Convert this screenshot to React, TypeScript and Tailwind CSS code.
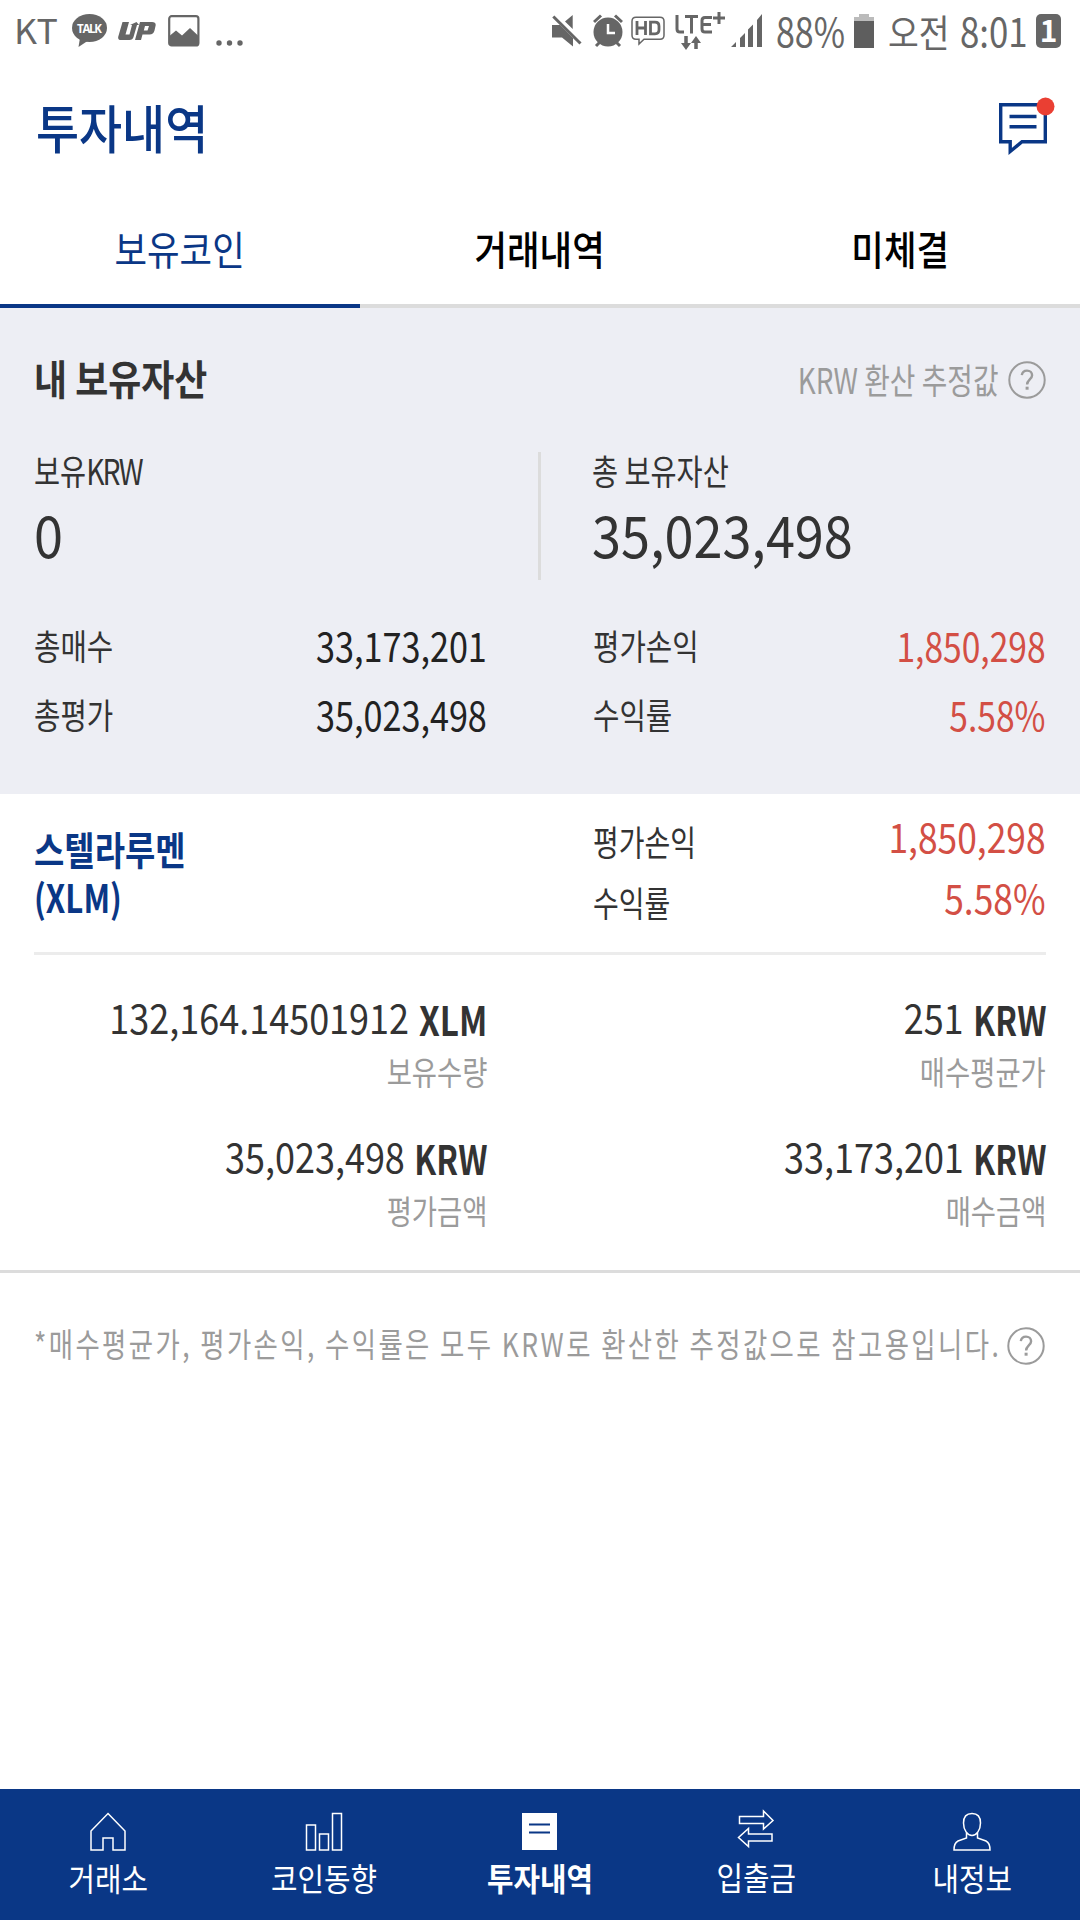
import type { ReactNode } from 'react';

const tabs = ['보유코인', '거래내역', '미체결'];

function HelpIcon() {
  return (
    <svg width="38" height="38" viewBox="0 0 38 38" fill="none" stroke="#9b9b9b" strokeWidth="2">
      <circle cx="19" cy="19" r="17.7" />
      <path d="M13.8 14.2c.4-3 2.3-4.6 5.2-4.6 3 0 5.1 1.8 5.1 4.6 0 4-5 4.6-5 9.4" strokeWidth="2.4" />
      <path d="M17.6 27.2h3" strokeWidth="3" />
    </svg>
  );
}

function StatusBar() {
  return (
    <div className="flex h-[62px] items-center justify-between pl-[14px] pr-[19px] text-[#666]">
      <div className="flex items-center">
        <span className="mb-[2px] w-[58px] origin-left scale-x-[1.05] text-[34px] leading-none">KT</span>
        <svg width="35" height="34" viewBox="0 0 35 34" fill="#666">
          <ellipse cx="17.5" cy="14" rx="17.5" ry="14" />
          <path d="M8 24 6.500 33 17 26z" />
          <text x="17.5" y="18.500" textAnchor="middle" fill="#fff" fontFamily="Open Sans" fontWeight="700" fontSize="11.500" textLength="25">TALK</text>
        </svg>
        <svg className="ml-[11px]" width="38" height="18" viewBox="0 0 38 18" fill="#666">
          <path d="M4.500 0h6.500L7.500 12.500h4L14 3l-2 .1L18.500 0 21 3h-2L15.500 15q-.8 3-4 3H3q-3.500 0-2.700-3.500z" />
          <path d="M22 0h12q4.500 0 3.500 4L36.500 8.500q-1 4-5 4h-7L23 18h-6zM27 4l-1.200 4.500h3.700L31 4z" fillRule="evenodd" />
        </svg>
        <svg className="ml-[12px]" width="32" height="32" viewBox="0 0 32 32">
          <rect x="1.200" y="1.200" width="29.200" height="29.200" rx="2.500" fill="none" stroke="#666" strokeWidth="2.200" />
          <path d="M2 20.500 8 15.500l6 5L22 13l8 7.500V30H2z" fill="#666" />
        </svg>
        <svg className="ml-[16px] mt-[23px]" width="28" height="6" viewBox="0 0 28 6" fill="#666">
          <circle cx="3" cy="3" r="2.700" />
          <circle cx="13.500" cy="3" r="2.700" />
          <circle cx="24" cy="3" r="2.700" />
        </svg>
      </div>
      <div className="flex items-center">
        <svg width="30" height="33" viewBox="0 0 30 33" fill="#666">
          <path d="M0 10h8l13 13v8.500L10 22.500H0zM20.700 0v14L13 6.500z" />
          <path d="M1.300 1.500 28.500 28.500" stroke="#666" strokeWidth="3" />
        </svg>
        <svg className="ml-[11px]" width="30" height="34" viewBox="0 0 30 34">
          <path d="M1 8 8 1.500M29 8 22 1.500M3 32l4-4M27 32l-4-4" stroke="#666" strokeWidth="3" />
          <circle cx="15" cy="18" r="14.500" fill="#666" />
          <path d="M15 10v9h7" fill="none" stroke="#fff" strokeWidth="2.500" />
        </svg>
        <svg className="ml-[8px]" width="34" height="30" viewBox="0 0 34 30" fill="none" stroke="#666">
          <path d="M5 1.200h24q4 0 4 4v14q0 4-4 4H13L8 28v-4.800H5q-4 0-4-4v-14q0-4 4-4z" strokeWidth="1.500" />
          <path d="M6 5v14M14.500 5v14M6 12h8.500M19.500 6.200h4.500q4 0 4 4v3.600q0 4-4 4h-4.500z" strokeWidth="2.800" />
        </svg>
        <svg className="ml-[10px]" width="50" height="40" viewBox="0 0 50 40" fill="none" stroke="#666">
          <path d="M2 4v14q0 3 3 3h4M10 5.500h13M16.500 5.500v17M37 6.500h-7q-3 0-3 3v8.500q0 3 3 3h7M27 13.500h9M38 7h12M44 1v12" strokeWidth="3" />
          <path d="M11 25v8M21 30v8" strokeWidth="3.500" />
          <path d="M6 32h10l-5 7zM16 32h10l-5-7z" fill="#666" stroke="none" />
        </svg>
        <svg className="ml-[6px]" width="32" height="34" viewBox="0 0 32 34" fill="#666">
          <path d="M0 33l5-5v5zM9 24l5-5v14H9zM17 15.500l5-5V33h-5zM26 6l5-6v33h-5z" />
        </svg>
        <span className="mb-[2px] ml-[13px] w-[68px] origin-left scale-x-[.85] text-[40px] leading-none">88%</span>
        <svg className="ml-[10px]" width="20" height="34" viewBox="0 0 20 34">
          <path d="M5 0h10v3h5v4H0V3h5z" fill="#bbb" />
          <path d="M0 7h20v27H0z" fill="#5e5e5e" />
        </svg>
        <span className="ml-[14px] w-[61px] origin-left scale-x-[.88] text-[38px] leading-none">오전</span>
        <span className="mb-[2px] ml-[11px] w-[68px] origin-left scale-x-[.87] text-[40px] leading-none">8:01</span>
        <span className="ml-[8px] flex h-[34px] w-[25px] items-center justify-center rounded-[5px] bg-[#666] pb-[4px] text-[30px] font-bold leading-none text-white">1</span>
      </div>
    </div>
  );
}

function SummaryRow({ label, value, red }: { label: string; value: string; red?: boolean }) {
  return (
    <div className="flex h-[69px] items-center justify-between">
      <span className="origin-left scale-x-[.82] text-[35px]">{label}</span>
      <span className={`origin-right text-[40px] ${red ? 'scale-x-[.84] text-[#d34f45]' : 'scale-x-[.855] text-[#222]'}`}>{value}</span>
    </div>
  );
}

function Holding({ value, unit, label }: { value: string; unit: string; label: string }) {
  return (
    <div className="flex h-[139px] flex-col">
      <div className="flex h-[58px] items-center justify-end">
        <span className="origin-right scale-x-[.9] pt-[4px] text-[40px]">{value}</span>
        <span className={`flex justify-end pt-[8px] ${unit === 'XLM' ? 'w-[78px]' : 'w-[82px]'}`}>
          <span className={`origin-right text-[40px] font-bold ${unit === 'XLM' ? 'scale-x-[.83]' : 'scale-x-[.8]'}`}>{unit}</span>
        </span>
      </div>
      <div className="flex h-[54px] items-center justify-end">
        <span className="origin-right scale-x-[.83] text-[33px] text-[#9b9b9b]">{label}</span>
      </div>
    </div>
  );
}

function NavItem({ label, active, children }: { label: string; active?: boolean; children: ReactNode }) {
  return (
    <div className="flex flex-1 flex-col items-center pt-[21px]">
      {children}
      <span className={`mt-[5px] scale-x-[.9] text-[32px] leading-[40px] ${active ? 'font-bold' : ''}`}>{label}</span>
    </div>
  );
}

export default function App() {
  return (
    <div className="flex h-[1920px] w-[1080px] flex-col overflow-hidden whitespace-nowrap bg-white font-['Noto_Sans_CJK_KR',sans-serif] leading-none text-[#333]">
      <StatusBar />

      <header className="flex h-[134px] items-center justify-between pb-[5px] pl-[36px] pr-[25px]">
        <h1 className="origin-left scale-x-[.9] text-[52px] font-medium text-[#0a3786]">투자내역</h1>
        <svg className="mb-[1px]" width="56" height="60" viewBox="0 0 56 60" fill="none" stroke="#0a3786" strokeWidth="3.400">
          <path d="M1.700 8.700h44.600v37H23L11.200 55.500v-9.800H1.700z" />
          <path d="M10.500 20.500h27M10.500 30.700h27" />
          <circle cx="46.500" cy="10.500" r="9" fill="#ea3f33" stroke="none" />
        </svg>
      </header>

      {/* Tabs */}
      <nav className="flex h-[112px] text-[40px]">
        {tabs.map((tab, idx) => (
          <div
            key={tab}
            className={`flex flex-1 items-center justify-center border-b-4 pb-[4px] ${
              idx === 0 ? 'border-[#0a3786] text-[#0a3786]' : 'border-[#dcdcdc] font-medium text-black'
            }`}
          >
            <span className="scale-x-[.885]">{tab}</span>
          </div>
        ))}
      </nav>

      {/* Total assets */}
      <section className="h-[486px] bg-[#edeef4] px-[34px] pt-[35px]">
        <div className="flex h-[70px] items-center justify-between">
          <h2 className="origin-left scale-x-[.875] pb-[2px] text-[41px] font-bold">내 보유자산</h2>
          <div className="flex items-center gap-[10px] text-[#9b9b9b]">
            <span className="origin-right scale-x-[.795] text-[35px]">KRW 환산 추정값</span>
            <div className="pt-[3px]">
              <HelpIcon />
            </div>
          </div>
        </div>
        <div className="mt-[39px] flex h-[128px]">
          <div className="w-[507px] border-r-[3px] border-[#dcdcdc]">
            <div className="flex h-[35px] items-center">
              <span className="origin-left scale-x-[.81] text-[35px]">
                보유<span className="tracking-[-2.500px]">KRW</span>
              </span>
            </div>
            <div className="flex h-[91px] items-center">
              <span className="origin-left scale-x-[.9] text-[58px]">0</span>
            </div>
          </div>
          <div className="pl-[51px]">
            <div className="flex h-[35px] items-center">
              <span className="origin-left scale-x-[.81] text-[35px]">총 보유자산</span>
            </div>
            <div className="flex h-[91px] items-center">
              <span className="origin-left scale-x-[.9] text-[58px]">35,023,498</span>
            </div>
          </div>
        </div>
        <div className="mt-[30px] grid grid-cols-[453px_453px] justify-between">
          <SummaryRow label="총매수" value="33,173,201" />
          <SummaryRow label="평가손익" value="1,850,298" red />
          <SummaryRow label="총평가" value="35,023,498" />
          <SummaryRow label="수익률" value="5.58%" red />
        </div>
      </section>

      {/* Coin holdings */}
      <section className="h-[479px] border-b-[3px] border-[#dcdcdc] px-[34px]">
        <div className="flex h-[161px] justify-between border-b-[3px] border-[#ececec]">
          <div className="pt-[30px] text-[39px] font-bold leading-[48px] text-[#0a3786]">
            <div className="origin-left scale-x-[.845]">스텔라루멘</div>
            <div className="origin-left scale-x-[.8]">(XLM)</div>
          </div>
          <div className="w-[453px] pt-[11px]">
            {[['평가손익', '1,850,298'], ['수익률', '5.58%']].map(([label, value]) => (
              <div key={label} className="flex h-[61px] items-center justify-between">
                <span className="origin-left scale-x-[.8] pt-[10px] text-[35px]">{label}</span>
                <span className="origin-right scale-x-[.885] text-[40px] text-[#d34f45]">{value}</span>
              </div>
            ))}
          </div>
        </div>
        <div className="grid grid-cols-[453px_453px] justify-between pt-[31px]">
          <Holding value="132,164.14501912" unit="XLM" label="보유수량" />
          <Holding value="251" unit="KRW" label="매수평균가" />
          <Holding value="35,023,498" unit="KRW" label="평가금액" />
          <Holding value="33,173,201" unit="KRW" label="매수금액" />
        </div>
      </section>

      <div className="flex items-start justify-between pl-[34px] pr-[35px] pt-[54px] text-[#9b9b9b]">
        <span className="w-[960px] origin-left scale-x-[.8] text-[33px] tracking-[3px]">
          *매수평균가, 평가손익, 수익률은 모두 KRW로 환산한 추정값으로 참고용입니다.
        </span>
        <HelpIcon />
      </div>

      {/* Bottom navigation */}
      <nav className="mt-auto flex h-[131px] bg-[#0a3786] text-white">
        <NavItem label="거래소">
          <svg width="38" height="42" viewBox="0 0 38 42" fill="none" stroke="#fff" strokeWidth="1.500">
            <path d="M19 3.500 36 21v19H24V28H14v12H2V21z" />
          </svg>
        </NavItem>
        <NavItem label="코인동향">
          <svg width="38" height="42" viewBox="0 0 38 42" fill="none" stroke="#fff" strokeWidth="1.500">
            <path d="M1.500 15h9v25h-9zM14.500 24h9v16h-9zM27.500 3.500h9V40h-9z" />
          </svg>
        </NavItem>
        <NavItem label="투자내역" active>
          <svg width="38" height="42" viewBox="0 0 38 42">
            <path d="M1 3h35v37H1z" fill="#fff" />
            <path d="M8 14.500h21M8 22.500h21" stroke="#0a3786" strokeWidth="2.200" />
          </svg>
        </NavItem>
        <NavItem label="입출금">
          <svg className="-mt-[1px]" width="38" height="42" viewBox="0 0 38 42" fill="none" stroke="#fff" strokeWidth="1.500">
            <path d="M2.500 7.500h24V2L36 11.500 26.500 20v-5.500h-24zM35 32H11.500v5.500L1.500 28.500l10-9V25H35z" />
          </svg>
        </NavItem>
        <NavItem label="내정보">
          <svg width="38" height="42" viewBox="0 0 38 42" fill="none" stroke="#fff" strokeWidth="1.500">
            <path d="M19 3.500c-6 0-8.500 3.500-8.500 9.500 0 7 4 12.500 8.500 12.500s8.500-5.500 8.500-12.500c0-6-2.500-9.500-8.500-9.500zM13.500 22.500v5.500L5 31q-4 2-4 9h36q0-7-4-9l-8.500-3v-5.500" />
          </svg>
        </NavItem>
      </nav>
    </div>
  );
}
